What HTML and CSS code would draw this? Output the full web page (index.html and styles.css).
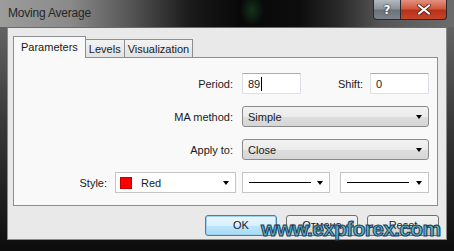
FILE: index.html
```html
<!DOCTYPE html>
<html lang="en">
<head>
    <meta charset="UTF-8">
    <title>Moving Average</title>
    <link rel="stylesheet" href="styles.css">
</head>
<body>
    <div class="window">
        <div class="titlebar">
            <span class="title">Moving Average</span>
            <div class="caption-btns">
                <div class="cap help">?</div>
                <div class="cap close">
                    <svg width="14" height="11" viewBox="0 0 14 11">
                        <path d="M2 1.5 L12 9.5 M12 1.5 L2 9.5" stroke="#5a1a10" stroke-width="3.6" stroke-linecap="round"/>
                        <path d="M2 1.5 L12 9.5 M12 1.5 L2 9.5" stroke="#ffffff" stroke-width="2.2" stroke-linecap="round"/>
                    </svg>
                </div>
            </div>
        </div>

        <div class="client">
            <div class="tabs">
                <div class="tab active">Parameters</div>
                <div class="tab">Levels</div>
                <div class="tab">Visualization</div>
            </div>

            <div class="panel">
                <div class="row">
                    <label class="lbl wide">Period:</label>
                    <div class="edit">89<span class="caret"></span></div>
                    <label class="lbl shift">Shift:</label>
                    <div class="edit">0</div>
                </div>
                <div class="row">
                    <label class="lbl wide">MA method:</label>
                    <div class="combo long">Simple<span class="arrow"></span></div>
                </div>
                <div class="row">
                    <label class="lbl wide">Apply to:</label>
                    <div class="combo long">Close<span class="arrow"></span></div>
                </div>
                <div class="row">
                    <label class="lbl style">Style:</label>
                    <div class="owner color-box"><span class="swatch"></span>Red<span class="arrow"></span></div>
                    <div class="owner line-box w88"><span class="line"></span><span class="arrow"></span></div>
                    <div class="owner line-box w89"><span class="line"></span><span class="arrow"></span></div>
                </div>
            </div>

            <div class="buttons">
                <div class="btn default">OK</div>
                <div class="btn">Отмена</div>
                <div class="btn">Reset</div>
            </div>
        </div>

        <div class="watermark">www.expforex.com</div>
    </div>
</body>
</html>
```

FILE: styles.css
```css
body {
    margin: 0;
    background: #000;
    font-family: "Liberation Sans", Arial, sans-serif;
}
.window {
    position: relative;
    width: 454px;
    height: 251px;
    display: flex;
    flex-direction: column;
    background: linear-gradient(to bottom, #6f6f6f 0px, #3a3a3a 120px, #141414 230px, #0c0c0c 251px);
    overflow: hidden;
}

/* title bar */
.titlebar {
    height: 27px;
    flex-shrink: 0;
    display: flex;
    align-items: flex-start;
    padding: 0 7px 0 8px;
    background:
        radial-gradient(ellipse 12px 16px at 252px 10px, rgba(40, 130, 60, 0.35), rgba(40, 130, 60, 0) 100%),
        linear-gradient(to right, #9c9c9c 0px, #8a8a8a 70px, #555 130px, #1a1a1a 190px, #080808 240px, #0d0d0d 300px, #2a2a2a 340px, #555 380px, #6c6c6c 454px);
}
.title {
    font-size: 12px;
    line-height: 27px;
    letter-spacing: -0.2px;
    color: #262626;
}
.caption-btns {
    margin-left: auto;
    display: flex;
}
.cap {
    height: 19px;
    display: flex;
    align-items: center;
    justify-content: center;
    border: 1px solid #262a30;
    border-top: none;
}
.help {
    width: 26px;
    border-radius: 0 0 0 4px;
    background: linear-gradient(to bottom, #b4b9bf 0%, #8d939b 45%, #6c727a 55%, #7c838b 100%);
    color: #fff;
    font-family: "DejaVu Sans", sans-serif;
    font-weight: bold;
    font-size: 12px;
    text-shadow: 0 0 2px #222, 0 0 1px #222;
}
.close {
    width: 45px;
    border-left: none;
    border-radius: 0 0 4px 0;
    background: linear-gradient(to bottom, #e2917f 0%, #d0583f 45%, #b7321a 55%, #c4462c 100%);
}

/* client area */
.client {
    height: 213px;
    margin: 0 7px;
    background: #e9e9e9;
    border: 1px solid #8a8a8a;
    border-top-color: #6a6a6a;
    box-sizing: border-box;
    padding: 8px 8px 0 5px;
    font-size: 11px;
    color: #1a1a1a;
}
.tabs {
    display: flex;
    height: 21px;
    align-items: flex-end;
}
.tab {
    height: 18px;
    box-sizing: border-box;
    padding: 0 3px;
    line-height: 18px;
    border: 1px solid #8c8e94;
    border-bottom: none;
    background: linear-gradient(to bottom, #f3f3f3, #e2e2e2);
    margin-left: -1px;
}
.tab.active {
    height: 22px;
    padding: 0 7px;
    line-height: 21px;
    margin-left: 0;
    margin-bottom: -1px;
    background: #f9f9f9;
    position: relative;
    z-index: 1;
}
.panel {
    height: 149px;
    box-sizing: border-box;
    border: 1px solid #8c8e94;
    background: #f9f9f9;
    padding: 15px 0 0 0;
    display: flex;
    flex-direction: column;
    gap: 12px;
}
.row {
    display: flex;
    align-items: center;
    height: 21px;
}
.lbl {
    text-align: right;
    flex-shrink: 0;
}
.lbl.wide {
    width: 219px;
    margin-right: 9px;
}
.lbl.shift {
    width: 62px;
    margin-right: 7px;
}
.lbl.style {
    width: 93px;
    margin-right: 8px;
}
.edit {
    width: 59px;
    height: 21px;
    box-sizing: border-box;
    border: 1px solid #dbdfe6;
    border-top-color: #abadb3;
    background: #fff;
    padding-left: 5px;
    display: flex;
    align-items: center;
}
.caret {
    width: 1px;
    height: 14px;
    background: #000;
    margin-left: 1px;
}
.combo {
    height: 21px;
    box-sizing: border-box;
    border: 1px solid #8a8a8a;
    border-radius: 3px;
    background: linear-gradient(to bottom, #f3f3f3 0%, #ebebeb 50%, #dedede 51%, #d6d6d6 100%);
    padding-left: 5px;
    display: flex;
    align-items: center;
}
.combo.long {
    width: 187px;
}
.arrow {
    margin-left: auto;
    margin-right: 6px;
    width: 0;
    height: 0;
    border-left: 3.5px solid transparent;
    border-right: 3.5px solid transparent;
    border-top: 4px solid #000;
}
.owner {
    height: 21px;
    box-sizing: border-box;
    border: 1px solid #c4c4c4;
    background: #fff;
    display: flex;
    align-items: center;
}
.color-box {
    width: 121px;
    margin-right: 6px;
    padding-left: 4px;
}
.swatch {
    width: 12px;
    height: 12px;
    box-sizing: border-box;
    background: #ff0000;
    border: 1px solid #c00000;
    margin-right: 9px;
}
.line-box {
    padding-left: 6px;
}
.line-box.w88 {
    width: 88px;
    margin-right: 10px;
}
.line-box.w89 {
    width: 89px;
}
.line {
    width: 62px;
    height: 1px;
    background: #000;
}

/* dialog buttons */
.buttons {
    display: flex;
    justify-content: flex-end;
    gap: 9px;
    margin: 9px -1px 0 0;
}
.btn {
    width: 72px;
    height: 21px;
    box-sizing: border-box;
    border: 1px solid #707070;
    border-radius: 3px;
    background: linear-gradient(to bottom, #f2f2f2 0%, #ebebeb 50%, #dddddd 51%, #cfcfcf 100%);
    text-align: center;
    line-height: 19px;
}
.btn.default {
    border-color: #3c7fb1;
    background: linear-gradient(to bottom, #eaf6fd 0%, #d9f0fc 50%, #bee6fd 51%, #a7d9f5 100%);
    box-shadow: inset 0 0 0 1px #9fd2f0;
}

/* watermark over the dialog */
.watermark {
    position: absolute;
    left: 261px;
    top: 217px;
    font-family: "Liberation Sans", Arial, sans-serif;
    font-weight: bold;
    font-size: 21px;
    letter-spacing: -0.7px;
    color: #58b2c6;
    -webkit-text-stroke: 1px #1d3a58;
    text-shadow: 0 0 1px #c8e6f0;
}
```
